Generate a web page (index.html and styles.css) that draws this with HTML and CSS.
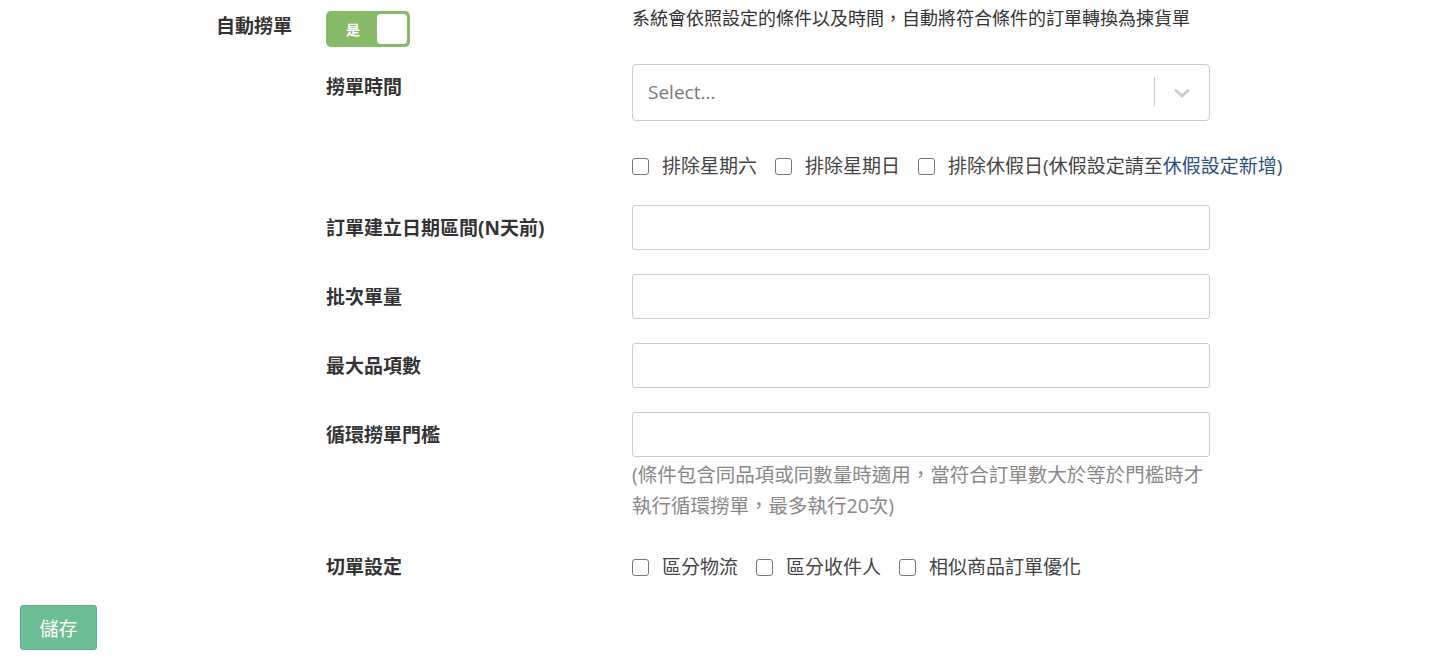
FILE: index.html
```html
<!DOCTYPE html>
<html lang="zh-Hant">
<head>
    <meta charset="UTF-8">
    <meta name="viewport" content="width=device-width, initial-scale=1.0">
    <title>自動撈單設定</title>
    <link rel="stylesheet" href="styles.css">
</head>
<body>

    <div class="settings">
        <div class="row row-top">
            <div class="label main-label">自動撈單</div>
            <div>
                <div class="toggle">
                    <span class="toggle-text">是</span>
                    <span class="knob"></span>
                </div>
            </div>
            <div class="desc">系統會依照設定的條件以及時間，自動將符合條件的訂單轉換為揀貨單</div>
        </div>

        <div class="row row-select">
            <div class="label sub">撈單時間</div>
            <div class="select">
                <span class="placeholder">Select...</span>
                <span class="sep"></span>
                <svg class="chevron" width="20" height="20" viewBox="0 0 20 20">
                    <path d="M4 7.5 L10 13 L16 7.5" fill="none" stroke="#cccccc" stroke-width="2.8" stroke-linecap="round" stroke-linejoin="round"/>
                </svg>
            </div>
        </div>

        <div class="row row-checks">
            <div class="checks">
                <label class="check"><input type="checkbox"><span>排除星期六</span></label>
                <label class="check"><input type="checkbox"><span>排除星期日</span></label>
                <label class="check"><input type="checkbox"><span>排除休假日(休假設定請至<a href="#">休假設定新增</a>)</span></label>
            </div>
        </div>

        <div class="row row-input">
            <div class="label sub">訂單建立日期區間(N天前)</div>
            <input class="field" type="text">
        </div>

        <div class="row row-input">
            <div class="label sub">批次單量</div>
            <input class="field" type="text">
        </div>

        <div class="row row-input">
            <div class="label sub">最大品項數</div>
            <input class="field" type="text">
        </div>

        <div class="row row-input">
            <div class="label sub">循環撈單門檻</div>
            <div>
                <input class="field" type="text">
                <div class="note">(條件包含同品項或同數量時適用，當符合訂單數大於等於門檻時才執行循環撈單，最多執行20次)</div>
            </div>
        </div>

        <div class="row row-split">
            <div class="label sub flat">切單設定</div>
            <div class="checks">
                <label class="check"><input type="checkbox"><span>區分物流</span></label>
                <label class="check"><input type="checkbox"><span>區分收件人</span></label>
                <label class="check"><input type="checkbox"><span>相似商品訂單優化</span></label>
            </div>
        </div>
    </div>

    <button class="save">儲存</button>

</body>
</html>
```

FILE: styles.css
```css
body {
    margin: 0;
    padding: 0;
    background-color: #fff;
    color: #333;
    font-family: "Open Sans", "Noto Sans CJK TC", sans-serif;
    font-size: 19px;
}

.settings {
    padding-left: 216px;
    padding-top: 11px;
}

.row {
    display: grid;
    grid-template-columns: 110px 306px 578px;
}

.label {
    font-weight: bold;
    line-height: 26px;
    color: #333;
}

.main-label {
    padding-top: 2px;
}

.sub {
    grid-column: 2;
    padding-top: 10px;
}

.sub.flat {
    padding-top: 0;
}

/* toggle */
.toggle {
    width: 84px;
    height: 36px;
    box-sizing: border-box;
    background-color: #88bb67;
    border-radius: 5px;
    padding: 3px;
    display: flex;
    align-items: center;
}

.toggle-text {
    flex: 1;
    text-align: center;
    color: #fff;
    font-weight: bold;
    font-size: 14px;
}

.knob {
    width: 30px;
    height: 30px;
    background-color: #fff;
    border-radius: 4px;
}

.desc {
    font-size: 18px;
    line-height: 22px;
    margin-top: -4px;
    white-space: nowrap;
}

/* select */
.row-select {
    margin-top: 17px;
}

.select {
    grid-column: 3;
    height: 57px;
    box-sizing: border-box;
    border: 1px solid #ccc;
    border-radius: 4px;
    display: flex;
    align-items: center;
    padding-left: 15px;
    padding-bottom: 2px;
}

.placeholder {
    flex: 1;
    color: #7a7a7a;
    font-size: 19px;
}

.sep {
    width: 1px;
    height: 29px;
    background-color: #ccc;
}

.chevron {
    margin: 2px 17px 0 17px;
}

/* checkboxes */
.row-checks {
    margin-top: 32px;
}

.checks {
    grid-column: 3;
    display: flex;
    gap: 18px;
    white-space: nowrap;
    line-height: 26px;
}

.check {
    display: flex;
    align-items: center;
    gap: 13px;
    color: #444;
}

.check input {
    appearance: none;
    -webkit-appearance: none;
    margin: 0;
    width: 17px;
    height: 17px;
    border: 1.5px solid #767676;
    border-radius: 3px;
    background: #fff;
}

.check a {
    color: #2b4f7e;
    text-decoration: none;
}

/* inputs */
.row-input {
    margin-top: 26px;
}

.row-input + .row-input {
    margin-top: 24px;
}

.field {
    grid-column: 3;
    display: block;
    width: 578px;
    height: 45px;
    box-sizing: border-box;
    border: 1px solid #ccc;
    border-radius: 3px;
    margin: 0;
}

.note {
    color: #888;
    font-size: 19.5px;
    line-height: 31px;
    margin-top: 2px;
}

.row-split {
    margin-top: 33px;
}

.save {
    margin: 25px 0 0 20px;
    width: 77px;
    height: 45px;
    background-color: #6dbd96;
    border: 1px solid #5fb088;
    border-radius: 3px;
    color: #fff;
    font-family: "Open Sans", "Noto Sans CJK TC", sans-serif;
    font-size: 19px;
    cursor: pointer;
}
```
